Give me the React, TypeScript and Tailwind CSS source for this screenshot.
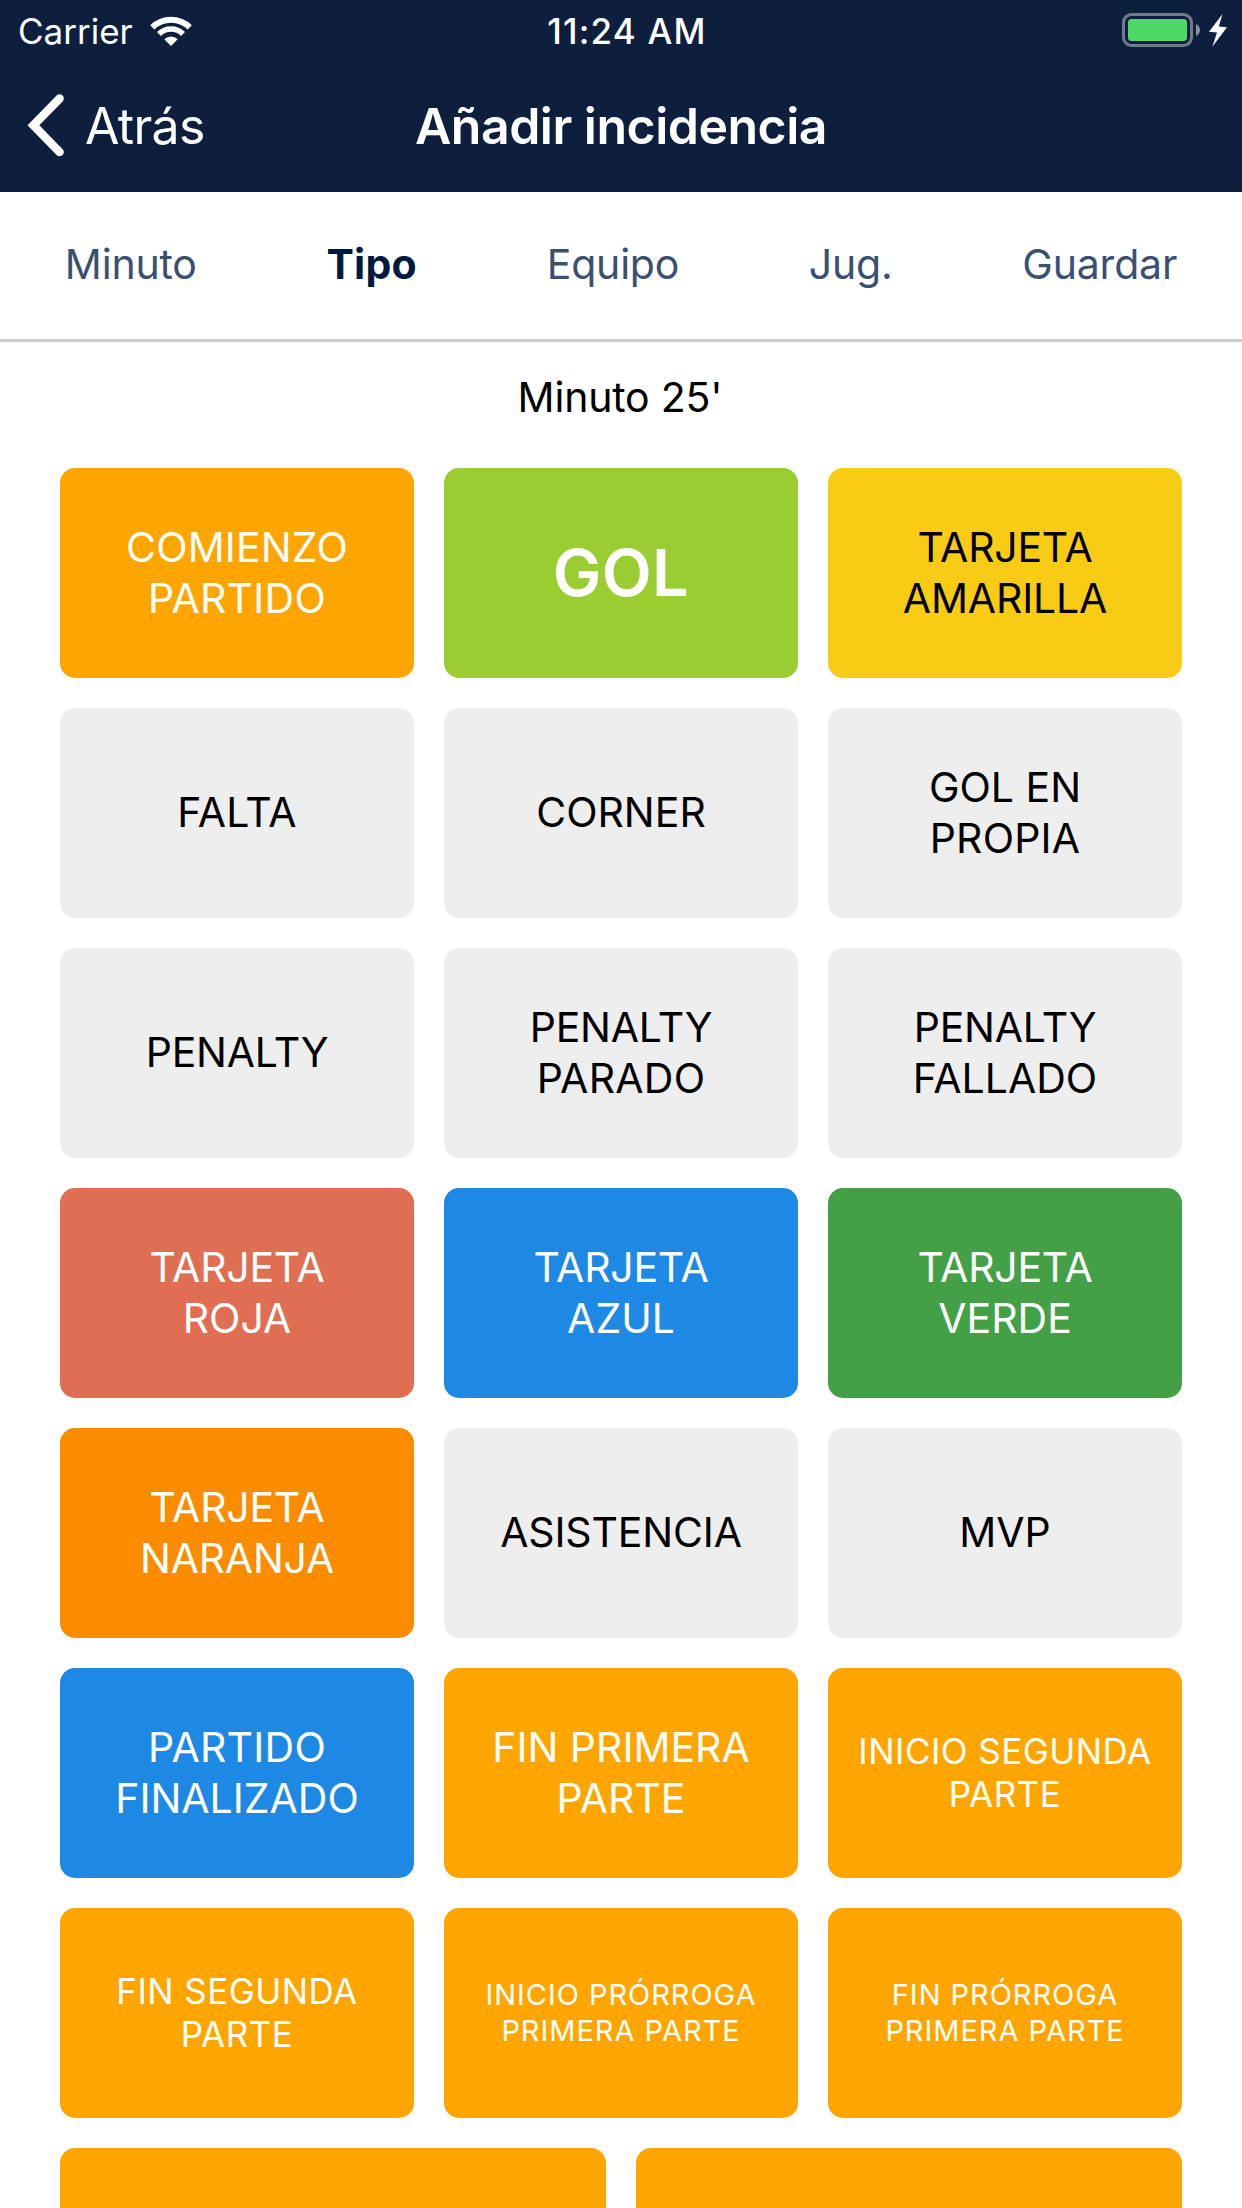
type Item = { lines: string[]; tone: string; size?: string };

const MD = "text-[41px] leading-[51px]";
const SM = "text-[35px] leading-[43px] tracking-[0.45px]";
const XS = "text-[29px] leading-[36px] tracking-[0.97px]";
const XL = "text-[65px] leading-[80px] font-semibold tracking-[0.3px]";

const ORANGE = "bg-[#ffa500] text-white";
const GRAY = "bg-[#eeeeee] text-black";
const BLUE = "bg-[#1e88e5] text-white";

const items: Item[] = [
  { lines: ["COMIENZO", "PARTIDO"], tone: ORANGE },
  { lines: ["GOL"], tone: "bg-[#9acd32] text-white", size: XL },
  { lines: ["TARJETA", "AMARILLA"], tone: "bg-[#f8cc14] text-black" },
  { lines: ["FALTA"], tone: GRAY },
  { lines: ["CORNER"], tone: GRAY },
  { lines: ["GOL EN", "PROPIA"], tone: GRAY },
  { lines: ["PENALTY"], tone: GRAY },
  { lines: ["PENALTY", "PARADO"], tone: GRAY },
  { lines: ["PENALTY", "FALLADO"], tone: GRAY },
  { lines: ["TARJETA", "ROJA"], tone: "bg-[#df6e53] text-white" },
  { lines: ["TARJETA", "AZUL"], tone: BLUE },
  { lines: ["TARJETA", "VERDE"], tone: "bg-[#43a047] text-white" },
  { lines: ["TARJETA", "NARANJA"], tone: "bg-[#fb8c00] text-white" },
  { lines: ["ASISTENCIA"], tone: GRAY },
  { lines: ["MVP"], tone: GRAY },
  { lines: ["PARTIDO", "FINALIZADO"], tone: BLUE },
  { lines: ["FIN PRIMERA", "PARTE"], tone: ORANGE },
  { lines: ["INICIO SEGUNDA", "PARTE"], tone: ORANGE, size: SM },
  { lines: ["FIN SEGUNDA", "PARTE"], tone: ORANGE, size: SM },
  { lines: ["INICIO PRÓRROGA", "PRIMERA PARTE"], tone: ORANGE, size: XS },
  { lines: ["FIN PRÓRROGA", "PRIMERA PARTE"], tone: ORANGE, size: XS },
];

const tracking: Record<string, string> = {
  TARJETA: "tracking-[-0.25px]",
  PENALTY: "tracking-[-0.25px]",
  NARANJA: "tracking-[-0.25px]",
  AMARILLA: "tracking-[-0.15px]",
  ASISTENCIA: "tracking-[-0.15px]",
  PARTIDO: "tracking-[0.25px]",
  PARADO: "tracking-[0.25px]",
  PROPIA: "tracking-[0.2px]",
  COMIENZO: "tracking-[0.15px]",
};

const tabs = ["Minuto", "Tipo", "Equipo", "Jug.", "Guardar"];

function Wifi() {
  return (
    <svg width="42" height="31" viewBox="150 15 42 31" fill="none" stroke="#fff">
      <path d="M152.3 26.3A26.7 26.7 0 0 1 189.7 26.3" strokeWidth="6" />
      <path d="M159 33A17 17 0 0 1 183 33" strokeWidth="5.6" />
      <path d="M171 45L164.3 38.3A9.5 9.5 0 0 1 177.7 38.3Z" fill="#fff" stroke="none" />
    </svg>
  );
}

function Battery() {
  return (
    <svg width="106" height="36" viewBox="1122 13 106 36">
      <rect x="1123.5" y="14.5" width="68" height="31" rx="8" fill="none" stroke="#6f7a8d" strokeWidth="3" />
      <rect x="1128" y="19" width="59" height="22" rx="3.5" fill="#4cd964" />
      <path d="M1196 24Q1200 26 1200 30T1196 36Z" fill="#868f9e" />
      <path d="M1222.5 14L1209 31.8L1217 32.4L1212.3 46.7L1227 27.2L1218.8 26.5Z" fill="#fff" />
    </svg>
  );
}

function StatusBar() {
  return (
    <div className="grid h-[62px] grid-cols-3 items-center pr-[14px] pl-[18px] text-[35px] leading-none text-white">
      <div className="flex items-center gap-[17px]">
        <span>Carrier</span>
        <Wifi />
      </div>
      <span className="pl-2 text-center font-medium tracking-[1.2px]">11:24 AM</span>
      <div className="flex justify-end">
        <Battery />
      </div>
    </div>
  );
}

function NavBar() {
  return (
    <div className="grid h-[127px] grid-cols-[330px_1fr_330px] items-center text-[50px] leading-[62px] text-white">
      <button className="flex items-center gap-[21px] pl-[27px]">
        <svg width="37" height="63" viewBox="0 0 37 63" fill="none" stroke="#fff" strokeWidth="8.4" strokeLinecap="round">
          <path d="M32.6 4.5L6.4 31.3L32.6 58.1" />
        </svg>
        <span className="tracking-[-0.7px]">Atrás</span>
      </button>
      <h1 className="text-center font-semibold tracking-[-0.5px] whitespace-nowrap">Añadir incidencia</h1>
    </div>
  );
}

function Tile({ lines, tone, size = MD }: Item) {
  const align = lines.length === 1 && size === MD ? "pb-[1px]" : "";
  return (
    <button className={`flex h-[210px] flex-col items-center justify-center rounded-[15px] ${align} ${tone} ${size}`}>
      {lines.map((line) => (
        <span key={line} className={`whitespace-nowrap ${tracking[line] ?? ""}`}>{line}</span>
      ))}
    </button>
  );
}

export default function App() {
  return (
    <div className="flex h-[2208px] w-[1242px] flex-col overflow-hidden bg-white font-['Inter',sans-serif]">
      <header className="shrink-0 bg-[#0e1f3d] pb-[3px]">
        <StatusBar />
        <NavBar />
      </header>
      <nav className="flex h-[150px] shrink-0 items-center justify-around border-b-[3px] border-[#cccccc] pb-[3px] text-[41px] leading-[51px] text-[#3a506f]">
        {tabs.map((tab) => (
          <button key={tab} className={tab === "Tipo" ? "font-bold tracking-[0.3px] text-[#001a3f]" : "tracking-[-0.2px]"}>{tab}</button>
        ))}
      </nav>
      <p className="shrink-0 pt-[30px] pr-[2px] text-center text-[41px] leading-[51px] tracking-[-0.2px] text-black">Minuto 25'</p>
      <main className="mt-[45px] flex shrink-0 flex-col gap-[30px] px-[60px]">
        <div className="grid grid-cols-3 gap-[30px]">
          {items.map((item) => (
            <Tile key={item.lines.join(" ")} {...item} />
          ))}
        </div>
        <div className="grid grid-cols-2 gap-[30px]">
          <div className="h-[210px] rounded-[15px] bg-[#ffa500]" />
          <div className="h-[210px] rounded-[15px] bg-[#ffa500]" />
        </div>
      </main>
    </div>
  );
}
